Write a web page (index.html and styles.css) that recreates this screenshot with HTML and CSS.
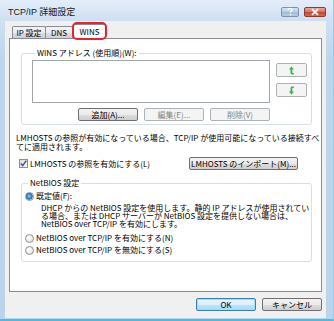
FILE: index.html
```html
<!DOCTYPE html>
<html lang="ja">
<head>
<meta charset="utf-8">
<title>TCP/IP 詳細設定</title>
<link rel="stylesheet" href="styles.css">
</head>
<body>
<div class="window">
  <div class="titlebar">
    <span class="title">TCP/IP 詳細設定</span>
    <div class="caption-btns">
      <span class="cbtn help"><svg width="18" height="10" viewBox="0 0 18 10"><path d="M7.2 3.2c0-1.1.8-1.8 1.9-1.8s1.9.6 1.9 1.6c0 1.2-1.5 1.4-1.5 2.6" fill="none" stroke="#fff" stroke-width="1.3"/><rect x="8.8" y="6.9" width="1.4" height="1.4" fill="#fff"/></svg></span>
      <span class="cbtn close"><svg width="22" height="10" viewBox="0 0 22 10"><path d="M8 2.2l6 5.6M14 2.2l-6 5.6" stroke="#fff" stroke-width="1.8"/></svg></span>
    </div>
  </div>
  <div class="client">
    <div class="tabs">
      <div class="tab tab-ip">IP 設定</div>
      <div class="tab tab-dns">DNS</div>
      <div class="tab tab-wins active">WINS</div>
      <span class="annot"></span>
    </div>
    <div class="panel">
      <div class="group g1">
        <div class="legend">WINS アドレス (使用順)(W):</div>
        <div class="g1-body">
          <div class="g1-left">
            <div class="listbox"></div>
            <div class="btnrow">
              <div class="btn w60">追加(A)...</div>
              <div class="btn w60 disabled">編集(E)...</div>
              <div class="btn w60 disabled">削除(V)</div>
            </div>
          </div>
          <div class="arrows">
            <div class="btn arrow disabled"><svg width="7" height="9" viewBox="0 0 7 9"><path d="M3.5 0.5L0.8 3.4h1.7v3.2c0 1.3.7 1.9 2 1.9h1.4V6.9h-.9c-.5 0-.7-.2-.7-.7V3.4h1.7z" fill="#3cb54a"/></svg></div>
            <div class="btn arrow disabled"><svg width="7" height="9" viewBox="0 0 7 9"><path d="M3.5 8.5L0.8 5.6h1.7V2.4c0-1.3.7-1.9 2-1.9h1.4v1.6h-.9c-.5 0-.7.2-.7.7v2.8h1.7z" fill="#3cb54a"/></svg></div>
          </div>
        </div>
      </div>
      <p class="note">LMHOSTS の参照が有効になっている場合、TCP/IP が使用可能になっている接続すべ<br>てに適用されます。</p>
      <div class="lmrow">
        <div class="check"><span class="cb"><svg width="7" height="7" viewBox="0 0 7 7"><path d="M0.8 3.6l1.9 2 3.6-5" fill="none" stroke="#3a56a0" stroke-width="1.5"/></svg></span><span>LMHOSTS の参照を有効にする(L)</span></div>
        <div class="btn import">LMHOSTS のインポート(M)...</div>
      </div>
      <div class="group g2">
        <div class="legend">NetBIOS 設定</div>
        <div class="radio first"><span class="rb on"></span><span>既定値(F):</span></div>
        <div class="desc">DHCP からの NetBIOS 設定を使用します。静的 IP アドレスが使用されてい<br>る場合、または DHCP サーバーが NetBIOS 設定を提供しない場合は、<br>NetBIOS over TCP/IP を有効にします。</div>
        <div class="radio r2"><span class="rb"></span><span>NetBIOS over TCP/IP を有効にする(N)</span></div>
        <div class="radio r3"><span class="rb"></span><span>NetBIOS over TCP/IP を無効にする(S)</span></div>
      </div>
    </div>
    <div class="footer">
      <div class="btn w60 ok">OK</div>
      <div class="btn w60">キャンセル</div>
    </div>
  </div>
</div>
</body>
</html>
```
FILE: styles.css
```css
html, body {
  margin: 0;
  padding: 0;
  background: #ffffff;
}
body {
  font-family: "Liberation Sans Narrow", "Noto Sans CJK JP", sans-serif;
  font-size: 8px;
  color: #000;
}
.window {
  width: 334px;
  height: 321px;
  box-sizing: border-box;
  display: flex;
  flex-direction: column;
  padding: 0 7px 1px 5px;
  background: linear-gradient(#e4eef9 0, #cfe0f2 20px, #bed5ed 60px, #bcd3ec 100%);
  border-bottom: 2px solid #38c4ea;
  border-right: 1px solid #7fd3ee;
}
.titlebar {
  height: 21px;
  display: flex;
  align-items: center;
  justify-content: space-between;
  padding: 0 0 0 3px;
}
.title {
  font-family: "Liberation Sans", "Noto Sans CJK JP", sans-serif;
  font-size: 9px;
  line-height: 11px;
  padding-top: 3px;
  color: #1a1a1a;
}
.caption-btns {
  display: flex;
  gap: 5px;
  align-self: flex-start;
  margin-top: 7px;
}
.cbtn {
  display: flex;
  height: 10px;
  border-radius: 2px;
  box-sizing: border-box;
}
.cbtn svg { display: block; }
.help {
  width: 18px;
  border: 1px solid #7b91ad;
  background: linear-gradient(#d8e4f1 0, #b9cbe1 50%, #a5bad4 51%, #b6cbe3 100%);
}
.close {
  width: 22px;
  border: 1px solid #8d3a32;
  background: linear-gradient(#e9a99c 0, #d4705f 50%, #c24632 51%, #d36b4f 100%);
}
.help svg, .close svg { margin: -1px; }

.client {
  flex: 1;
  background: #f0f0f0;
  padding: 3px 4px 0 4px;
  display: flex;
  flex-direction: column;
  border-left: 0;
}
.tabs {
  position: relative;
  display: flex;
  align-items: flex-start;
  height: 15px;
  margin-bottom: -1px;
  padding-left: 3px;
  z-index: 2;
}
.tab {
  box-sizing: border-box;
  height: 12px;
  margin-top: 2px;
  border: 1px solid #898c95;
  border-bottom: 0;
  border-radius: 2px 2px 0 0;
  background: linear-gradient(#f3f3f3 0, #ebebeb 50%, #dddddd 51%, #cfcfcf 100%);
  display: flex;
  align-items: center;
  justify-content: center;
  line-height: 10px;
}
.tab-ip { width: 34px; }
.tab-dns { width: 28px; margin-left: -1px; }
.tab-wins { width: 33px; }
.tab.active {
  height: 15px;
  margin-top: 0;
  background: #fff;
  padding-bottom: 1px;
}
.annot {
  position: absolute;
  left: 63px;
  top: -2px;
  width: 35px;
  height: 18px;
  box-sizing: border-box;
  border: 2px solid #e3262b;
  border-radius: 5px;
}
.panel {
  height: 254px;
  box-sizing: border-box;
  border: 1px solid #898c95;
  background: #fff;
  padding: 0 9px 0 6px;
  display: flex;
  flex-direction: column;
}
.group {
  border: 1px solid #d5dfe5;
  border-radius: 3px;
  margin-left: 5px;
  display: flex;
  flex-direction: column;
}
.legend {
  align-self: flex-start;
  background: #fff;
  height: 10px;
  line-height: 10px;
  padding: 0 2px;
  margin-top: -6px;
  margin-left: 3px;
  white-space: nowrap;
}
.g1 {
  margin-top: 14px;
  padding: 0 4px 3px 10px;
}
.g1-body {
  display: flex;
  gap: 6px;
  margin-top: 2px;
}
.g1-left {
  width: 238px;
  display: flex;
  flex-direction: column;
}
.listbox {
  height: 43px;
  box-sizing: border-box;
  border: 1px solid #a2a5ab;
  background: #fff;
}
.btnrow {
  display: flex;
  justify-content: flex-end;
  gap: 6px;
  margin-top: 5px;
}
.btn {
  height: 13px;
  box-sizing: border-box;
  border: 1px solid #707070;
  border-radius: 2px;
  background: linear-gradient(#f2f2f2 0, #ebebeb 50%, #dddddd 51%, #cfcfcf 100%);
  display: flex;
  align-items: center;
  justify-content: center;
  line-height: 10px;
  white-space: nowrap;
}
.btn.disabled {
  border-color: #adb2b5;
  background: #f4f4f4;
  color: #838383;
}
.w60 { width: 60px; }
.arrows {
  display: flex;
  flex-direction: column;
  gap: 6px;
  padding-top: 3px;
}
.btn.arrow {
  width: 31px;
  height: 14px;
}
.arrow svg { display: block; }
.note {
  margin: 8px 0 0 0;
  line-height: 9px;
  white-space: nowrap;
}
.lmrow {
  display: flex;
  align-items: center;
  justify-content: space-between;
  margin-top: 6px;
  padding-right: 14px;
}
.check {
  display: flex;
  align-items: center;
  gap: 2px;
  margin-left: 3px;
}
.cb {
  width: 9px;
  height: 9px;
  box-sizing: border-box;
  border: 1px solid #8e8f8f;
  background: linear-gradient(135deg, #dcdcdc, #fbfbfb);
  display: flex;
  align-items: center;
  justify-content: center;
}
.cb svg { display: block; }
.btn.import { width: 109px; }
.g2 {
  margin-top: 13px;
  padding: 0 4px 6px 3px;
}
.radio {
  display: flex;
  align-items: center;
  gap: 2px;
  height: 10px;
  line-height: 10px;
}
.radio.first { margin-top: 3px; }
.radio.r2 { margin-top: 5px; }
.radio.r3 { margin-top: 2px; }
.rb {
  width: 9px;
  height: 9px;
  box-sizing: border-box;
  border-radius: 50%;
  border: 1px solid #8e8f8f;
  background: radial-gradient(circle at 40% 40%, #ffffff, #dcdcdc);
}
.rb.on {
  background: radial-gradient(circle at 45% 45%, #8ad0f7 0, #2f7fcf 45%, #2a5fa8 60%, #e8e8e8 68%, #f6f6f6 100%);
}
.desc {
  margin: 3px 0 0 16px;
  line-height: 8px;
  white-space: nowrap;
}
.footer {
  display: flex;
  justify-content: flex-end;
  gap: 6px;
  margin-top: 6px;
}
.btn.ok {
  border-color: #3c7fb1;
  box-shadow: inset 0 0 0 1px #9ee0fa;
  background: linear-gradient(#eaf6fd 0, #d9f0fc 50%, #bee6fd 51%, #a7d9f5 100%);
}
```
